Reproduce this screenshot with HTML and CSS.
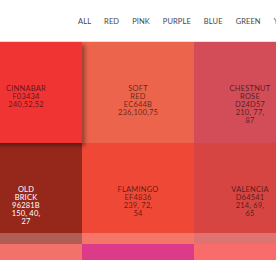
FILE: index.html
```html
<!DOCTYPE html>
<html lang="en">
<head>
    <meta charset="UTF-8">
    <meta name="viewport" content="width=device-width, initial-scale=1.0">
    <title>Reds</title>
    <link rel="stylesheet" href="styles.css">
</head>
<body>

<!-- Colour filter -->
<nav class="filters">
    <a href="#">All</a>
    <a href="#">Red</a>
    <a href="#">Pink</a>
    <a href="#">Purple</a>
    <a href="#">Blue</a>
    <a href="#">Green</a>
    <a href="#">Yellow</a>
</nav>

<!-- Swatches -->
<div class="swatches">
    <div class="swatch active" style="background: #F03434;">
        <p class="label">Cinnabar<br>F03434<br>240,52,52</p>
    </div>
    <div class="swatch" style="background: #EC644B;">
        <p class="label">Soft<br>Red<br>EC644B<br>236,100,75</p>
    </div>
    <div class="swatch" style="background: #D24D57;">
        <p class="label">Chestnut<br>Rose<br>D24D57<br>210, 77,<br>87</p>
    </div>
    <div class="swatch dark faded" style="background: #96281B;">
        <p class="label">Old<br>Brick<br>96281B<br>150, 40,<br>27</p>
    </div>
    <div class="swatch faded" style="background: #EF4836;">
        <p class="label">Flamingo<br>EF4836<br>239, 72,<br>54</p>
    </div>
    <div class="swatch faded" style="background: #D64541;">
        <p class="label">Valencia<br>D64541<br>214, 69,<br>65</p>
    </div>
    <div class="swatch" style="background: #F0726A;"></div>
    <div class="swatch" style="background: #DC3B8A;"></div>
    <div class="swatch" style="background: #F86C6C;"></div>
</div>

</body>
</html>
```

FILE: styles.css
```css
body {
    margin: 0;
    font-family: Lato, "Open Sans", sans-serif;
    background: #fff;
    overflow: hidden;
}

.filters {
    height: 42px;
    display: flex;
    align-items: center;
    gap: 13px;
    padding-left: 78px;
    padding-top: 1px;
    white-space: nowrap;
    border-bottom: 1px solid #f6dada;
    box-sizing: border-box;
}
.filters a {
    color: #444;
    text-decoration: none;
    text-transform: uppercase;
    font-size: 7.5px;
    letter-spacing: 0.1px;
}

.swatches {
    display: grid;
    grid-template-columns: repeat(3, 112px);
    grid-auto-rows: 101px;
    margin-left: -30px;
}

.swatch {
    position: relative;
    padding-top: 43px;
    box-sizing: border-box;
    text-align: center;
}
.swatch.active {
    z-index: 1;
    box-shadow: 3px 3px 4px rgba(0, 0, 0, 0.35);
}
/* lighter strip along the bottom */
.swatch.faded::after {
    content: "";
    position: absolute;
    left: 0;
    right: 0;
    bottom: 0;
    height: 11px;
    background: rgba(255, 255, 255, 0.25);
}

.label {
    margin: 0;
    font-size: 7.5px;
    line-height: 8px;
    letter-spacing: 0.2px;
    white-space: nowrap;
    text-transform: uppercase;
    color: rgba(0, 0, 0, 0.62);
}
.dark .label {
    color: #fff;
}
```
